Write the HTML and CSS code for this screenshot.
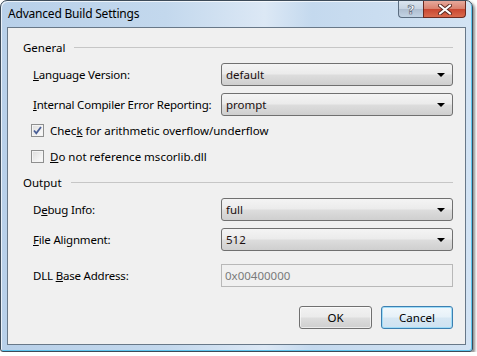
FILE: index.html
```html
<!DOCTYPE html>
<html lang="en">
<head>
    <meta charset="UTF-8">
    <meta name="viewport" content="width=device-width, initial-scale=1.0">
    <title>Advanced Build Settings</title>
    <link rel="stylesheet" href="styles.css">
</head>
<body>
    <div class="window">
        <div class="titlebar">
            <span class="title">Advanced Build Settings</span>
            <div class="caption-buttons">
                <span class="cap-btn help">?</span>
                <span class="cap-btn close">
                    <svg width="14" height="11" viewBox="0 0 14 11">
                        <path d="M2 1.5 L12 9.5 M12 1.5 L2 9.5" stroke="#5a2a22" stroke-width="4" stroke-linecap="round"/>
                        <path d="M2 1.5 L12 9.5 M12 1.5 L2 9.5" stroke="#ffffff" stroke-width="2.2" stroke-linecap="round"/>
                    </svg>
                </span>
            </div>
        </div>

        <div class="client">
            <div class="group-header"><span>General</span><span class="rule"></span></div>

            <div class="field first">
                <label><u>L</u>anguage Version:</label>
                <div class="combo">default</div>
            </div>
            <div class="field">
                <label><u>I</u>nternal Compiler Error Reporting:</label>
                <div class="combo">prompt</div>
            </div>

            <div class="check-row first">
                <span class="checkbox">
                    <svg width="11" height="11" viewBox="0 0 11 11">
                        <path d="M2 5.5 L4.3 8.3 L9 2" fill="none" stroke="#4a5f97" stroke-width="1.8"/>
                    </svg>
                </span>
                <span>Chec<u>k</u> for arithmetic overflow/underflow</span>
            </div>
            <div class="check-row">
                <span class="checkbox"></span>
                <span><u>D</u>o not reference mscorlib.dll</span>
            </div>

            <div class="group-header output"><span>Output</span><span class="rule"></span></div>

            <div class="field first">
                <label>D<u>e</u>bug Info:</label>
                <div class="combo">full</div>
            </div>
            <div class="field">
                <label><u>F</u>ile Alignment:</label>
                <div class="combo">512</div>
            </div>
            <div class="field spaced">
                <label>DLL <u>B</u>ase Address:</label>
                <div class="textbox">0x00400000</div>
            </div>

            <div class="buttons">
                <button class="btn">OK</button>
                <button class="btn focused">Cancel</button>
            </div>
        </div>
    </div>
</body>
</html>
```

FILE: styles.css
```css
body {
    margin: 0;
    background-color: #ffffff;
    font-family: "Noto Sans", "DejaVu Sans", sans-serif;
    font-size: 11.5px;
    color: #000000;
}
.window {
    width: 473px;
    height: 352px;
    box-sizing: border-box;
    border: 1px solid #3d4b59;
    border-radius: 7px 7px 3px 3px;
    background: linear-gradient(90deg, #b8d0e9 0%, #c3d8ed 35%, #dce8f5 56%, #c4d9ee 66%, #d3e3f3 100%);
    box-shadow: 2px 2px 3px rgba(0, 0, 0, 0.45), inset 1px 1px 0 rgba(255, 255, 255, 0.7), inset -1px -1px 0 #5ec6ef;
    display: flex;
    flex-direction: column;
}
.titlebar {
    height: 26px;
    display: flex;
    justify-content: space-between;
    padding: 0 6px 0 7px;
}
.title {
    padding-top: 5px;
    line-height: 16px;
    font-size: 12px;
    letter-spacing: -0.2px;
}
.caption-buttons {
    display: flex;
    height: 17px;
}
.cap-btn {
    display: flex;
    align-items: center;
    justify-content: center;
    box-sizing: border-box;
    height: 17px;
    border: 1px solid #5b6d80;
    border-top: none;
}
.help {
    width: 25px;
    border-radius: 0 0 0 4px;
    border-right: none;
    background: linear-gradient(#dbe5ef 0%, #c6d3e1 50%, #aebdcf 50%, #c3d3e4 100%);
    color: #ffffff;
    font-family: "DejaVu Sans", sans-serif;
    font-weight: bold;
    font-size: 13px;
    -webkit-text-stroke: 0.6px #4b5a6b;
}
.close {
    width: 43px;
    border-radius: 0 0 4px 0;
    border-color: #6b2a20;
    background: linear-gradient(#e6a99c 0%, #d9806d 50%, #c84630 50%, #d96a4d 100%);
}
.client {
    flex: 1;
    margin: 0 6px 6px 6px;
    border: 1px solid #687888;
    background-color: #f0f0f0;
    padding: 11px 12px 0 15px;
}
.group-header {
    display: flex;
    align-items: center;
    gap: 9px;
    height: 16px;
}
.group-header.output {
    margin-top: 10px;
}
.rule {
    flex: 1;
    height: 1px;
    background-color: #c6c6c6;
}
.field {
    display: flex;
    align-items: center;
    padding-left: 10px;
    margin-top: 7px;
}
.field.first {
    margin-top: 8px;
}
.field.spaced {
    margin-top: 13px;
}
.field label {
    width: 188px;
    flex-shrink: 0;
    white-space: nowrap;
    letter-spacing: -0.2px;
}
.combo {
    flex: 1;
    position: relative;
    box-sizing: border-box;
    height: 23px;
    line-height: 21px;
    padding-left: 4px;
    border: 1px solid #707070;
    border-radius: 3px;
    background: linear-gradient(#f4f4f4 0%, #ebebeb 48%, #dddddd 52%, #cfcfcf 100%);
    color: #1b0f0f;
}
.combo::after {
    content: "";
    position: absolute;
    right: 7px;
    top: 9px;
    border-left: 4px solid transparent;
    border-right: 4px solid transparent;
    border-top: 4px solid #000000;
}
.textbox {
    flex: 1;
    box-sizing: border-box;
    height: 23px;
    line-height: 21px;
    padding-left: 3px;
    border: 1px solid #b8b8b8;
    color: #7a7a7a;
}
.check-row {
    display: flex;
    align-items: center;
    height: 16px;
    padding-left: 8px;
    margin-top: 6px;
    white-space: nowrap;
}
.check-row + .check-row {
    margin-top: 10px;
}
.checkbox {
    display: flex;
    align-items: center;
    justify-content: center;
    box-sizing: border-box;
    width: 13px;
    height: 13px;
    margin-right: 6px;
    border: 1px solid #8e8f8f;
    background: linear-gradient(135deg, #dcdcdc 0%, #f4f4f4 70%, #fbfbfb 100%);
    box-shadow: inset 0 0 0 1px #f4f4f4;
}
.buttons {
    display: flex;
    justify-content: flex-end;
    gap: 9px;
    margin-top: 19px;
}
.btn {
    width: 73px;
    height: 23px;
    border: 1px solid #707070;
    border-radius: 3px;
    background: linear-gradient(#f2f2f2 0%, #ebebeb 48%, #dddddd 52%, #cfcfcf 100%);
    box-shadow: inset 0 0 0 1px rgba(255, 255, 255, 0.6);
    font-family: "Noto Sans", "DejaVu Sans", sans-serif;
    font-size: 11.5px;
    color: #000000;
    padding: 0;
}
.btn.focused {
    width: 72px;
    border-color: #3c7fb1;
    background: linear-gradient(#f2f8fc 0%, #e6f1f8 48%, #d6e7f3 52%, #cfe2f1 100%);
    box-shadow: inset 0 0 0 1px #9fdcf7;
}
```
